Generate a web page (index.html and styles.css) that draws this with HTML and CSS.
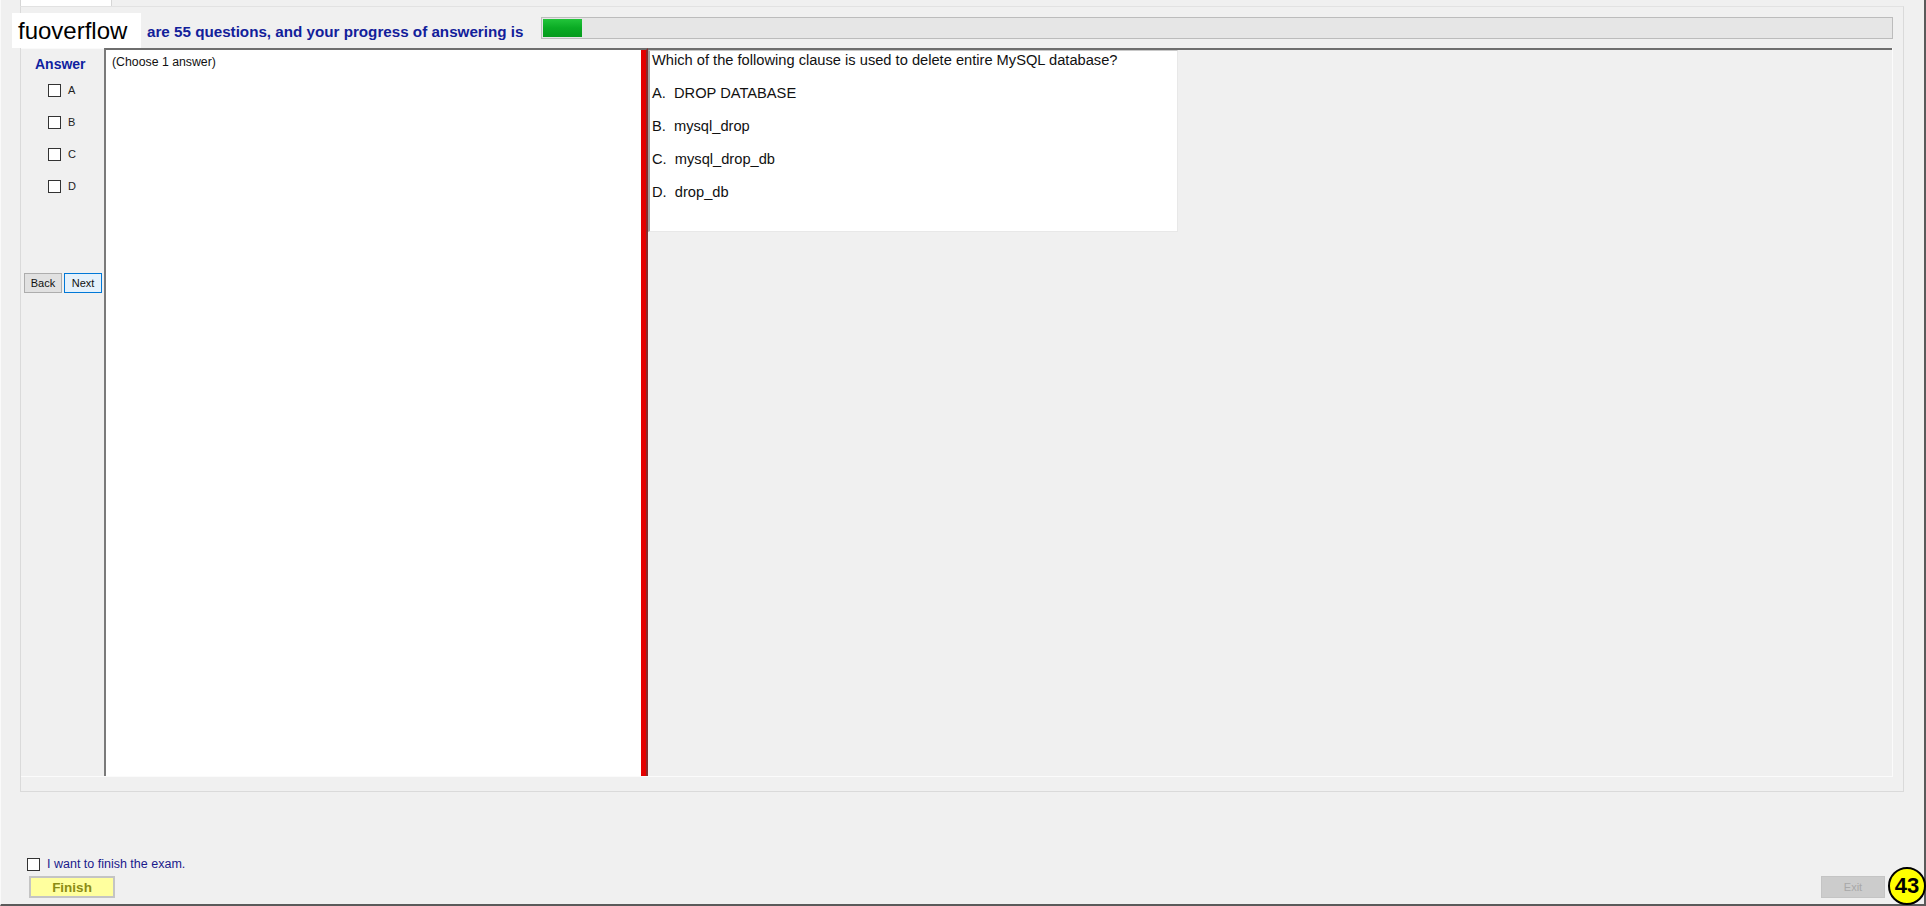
FILE: index.html
```html
<!DOCTYPE html>
<html lang="en">
<head>
    <meta charset="UTF-8">
    <title>Exam</title>
    <link rel="stylesheet" href="styles.css">
</head>
<body>
    <div class="window">
        <div class="tab-strip">
            <div class="tab"></div>
        </div>

        <div class="tab-page">
            <div class="header">
                <span class="header-text">are 55 questions, and your progress of answering is</span>
                <div class="progress">
                    <div class="progress-fill" style="width: 39px"></div>
                </div>
            </div>

            <div class="content">
                <div class="answer-col">
                    <div class="answer-title">Answer</div>
                    <label class="choice"><span class="box"></span>A</label>
                    <label class="choice"><span class="box"></span>B</label>
                    <label class="choice"><span class="box"></span>C</label>
                    <label class="choice"><span class="box"></span>D</label>
                    <div class="nav-buttons">
                        <button class="btn">Back</button>
                        <button class="btn btn-focus">Next</button>
                    </div>
                </div>

                <div class="left-pane">
                    <div class="hint">(Choose 1 answer)</div>
                </div>

                <div class="splitter"></div>

                <div class="right-pane">
                    <div class="question-box">
                        <p class="question">Which of the following clause is used to delete entire MySQL database?</p>
                        <p class="option">A.&nbsp; DROP DATABASE</p>
                        <p class="option">B.&nbsp; mysql_drop</p>
                        <p class="option">C.&nbsp; mysql_drop_db</p>
                        <p class="option">D.&nbsp; drop_db</p>
                    </div>
                </div>
            </div>
        </div>

        <div class="footer">
            <div class="footer-left">
                <label class="finish-check"><span class="box"></span>I want to finish the exam.</label>
                <button class="finish-btn">Finish</button>
            </div>
            <button class="exit-btn">Exit</button>
        </div>

        <!-- watermark and counter sit on top of the form -->
        <div class="logo">fuoverflow</div>
        <div class="badge">43</div>
    </div>
</body>
</html>
```

FILE: styles.css
```css
* {
    margin: 0;
    padding: 0;
    box-sizing: border-box;
}

body {
    font-family: "Liberation Sans", Arial, sans-serif;
    background: #f0f0f0;
    width: 1926px;
    height: 906px;
    overflow: hidden;
}

.window {
    position: relative;
    width: 1926px;
    height: 906px;
    border-left: 1px solid #fafafa;
    border-right: 2px solid #5a5a5a;
    border-bottom: 2px solid #5a5a5a;
    display: flex;
    flex-direction: column;
}

.tab-strip {
    height: 6px;
    padding-left: 19px;
}

.tab {
    width: 92px;
    height: 6px;
    background: #ffffff;
    border-left: 1px solid #d6d6d6;
    border-right: 1px solid #d6d6d6;
}

.tab-page {
    margin-left: 19px;
    width: 1884px;
    height: 786px;
    border: 1px solid #dadada;
    border-top-color: #e2e2e2;
    display: flex;
    flex-direction: column;
}

.header {
    height: 41px;
    display: flex;
    align-items: flex-start;
    padding-top: 10px;
}

.header-text {
    margin-left: 126px;
    margin-top: 6px;
    width: 394px;
    font-size: 15.2px;
    font-weight: bold;
    color: #12209a;
    white-space: nowrap;
}

.progress {
    width: 1352px;
    height: 22px;
    border: 1px solid #bcbcbc;
    background: #e6e6e6;
    padding: 1px;
}

.progress-fill {
    height: 100%;
    background: linear-gradient(180deg, #22c43a 0%, #0aab24 50%, #079b1e 100%);
}

.content {
    display: flex;
    height: 729px;
    width: 1872px;
    border-bottom: 1px solid #fbfbfb;
    border-right: 1px solid #fbfbfb;
}

.answer-col {
    width: 83px;
    display: flex;
    flex-direction: column;
    align-items: flex-start;
    border-top: 1px solid #fafafa;
}

.answer-title {
    margin: 7px 0 0 14px;
    font-size: 14px;
    font-weight: bold;
    color: #0f1fa0;
}

.choice {
    display: flex;
    align-items: center;
    margin-left: 27px;
    margin-top: 12px;
    height: 20px;
    font-size: 11px;
    color: #222;
}

.choice:first-of-type {
    margin-top: 8px;
}

.box {
    width: 13px;
    height: 13px;
    border: 1px solid #333;
    background: #fff;
    margin-right: 7px;
}

.nav-buttons {
    display: flex;
    gap: 2px;
    margin: 77px 0 0 3px;
}

.btn {
    width: 38px;
    height: 20px;
    font-family: "Liberation Sans", Arial, sans-serif;
    font-size: 11px;
    color: #111;
    background: #e1e1e1;
    border: 1px solid #adadad;
}

.btn-focus {
    background: #e5f1fb;
    border-color: #0078d7;
}

.left-pane {
    width: 537px;
    background: #ffffff;
    border-left: 2px solid #7a7a7a;
    border-top: 2px solid #6e6e6e;
    padding: 5px 0 0 6px;
}

.hint {
    font-size: 12.3px;
    color: #111;
}

.splitter {
    width: 7px;
    background: #e30000;
    border-right: 2px solid #8a2a2a;
    border-top: 2px solid #6e6e6e;
}

.right-pane {
    flex: 1;
    border-top: 2px solid #6e6e6e;
}

.question-box {
    width: 530px;
    height: 182px;
    background: #ffffff;
    border-left: 2px solid #a0a0a0;
    border-top: 1px solid #c8c8c8;
    border-right: 1px solid #e8e8e8;
    border-bottom: 1px solid #e8e8e8;
    padding: 1px 0 0 2px;
}

.question,
.option {
    font-size: 14.67px;
    color: #111;
    line-height: 17px;
}

.option {
    margin-top: 16px;
}

.footer {
    flex: 1;
    display: flex;
    align-items: flex-end;
    justify-content: space-between;
    padding: 0 39px 6px 26px;
}

.footer-left {
    display: flex;
    flex-direction: column;
    gap: 5px;
}

.finish-check {
    display: flex;
    align-items: center;
    font-size: 12.5px;
    color: #1a1a8c;
}

.finish-check .box {
    width: 13px;
    height: 13px;
    margin-right: 7px;
}

.finish-btn {
    margin-left: 2px;
    width: 86px;
    height: 22px;
    background: #ffff9e;
    border: 2px solid #c4c4c4;
    font-family: "Liberation Sans", Arial, sans-serif;
    font-size: 13.5px;
    font-weight: bold;
    color: #8c8c14;
}

.exit-btn {
    width: 64px;
    height: 22px;
    background: #cccccc;
    border: 1px solid #c4c4c4;
    font-family: "Liberation Sans", Arial, sans-serif;
    font-size: 11px;
    color: #a8a8a8;
}

.logo {
    position: absolute;
    left: 11px;
    top: 13px;
    width: 129px;
    height: 35px;
    background: #ffffff;
    padding-left: 6px;
    font-size: 24px;
    line-height: 35px;
    color: #000;
}

.badge {
    position: absolute;
    left: 1887px;
    top: 867px;
    width: 38px;
    height: 38px;
    border-radius: 50%;
    background: #ffff00;
    border: 2px solid #000;
    font-size: 22px;
    font-weight: bold;
    line-height: 34px;
    text-align: center;
    color: #000;
}
```
